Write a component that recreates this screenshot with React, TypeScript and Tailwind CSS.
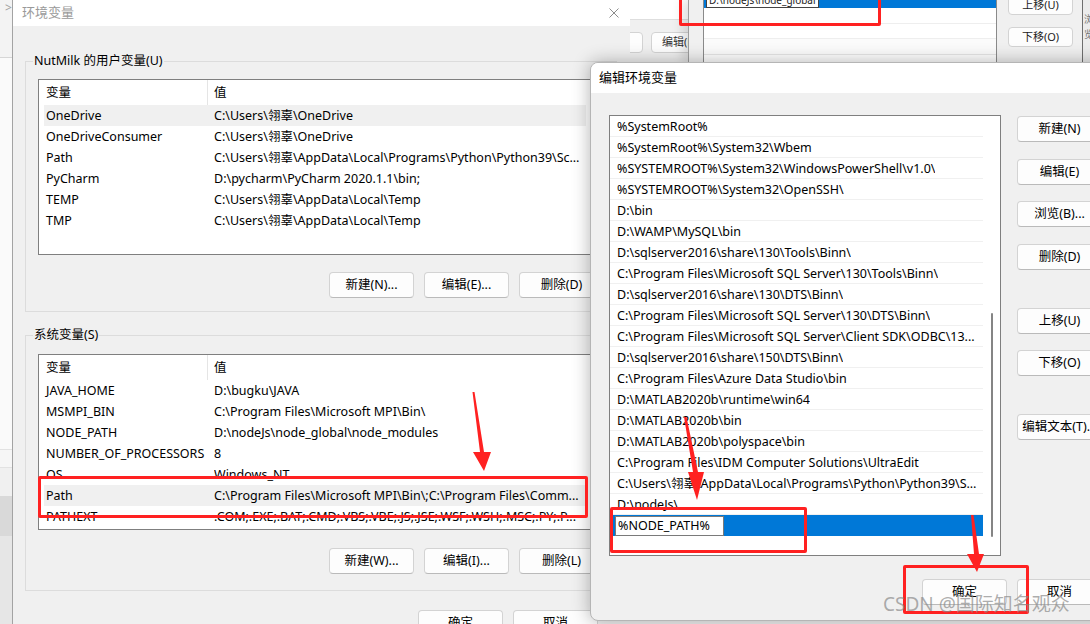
import React from "react";

const userVars: [string, string][] = [
  ["OneDrive", "C:\\Users\\翎辜\\OneDrive"],
  ["OneDriveConsumer", "C:\\Users\\翎辜\\OneDrive"],
  ["Path", "C:\\Users\\翎辜\\AppData\\Local\\Programs\\Python\\Python39\\Scr..."],
  ["PyCharm", "D:\\pycharm\\PyCharm 2020.1.1\\bin;"],
  ["TEMP", "C:\\Users\\翎辜\\AppData\\Local\\Temp"],
  ["TMP", "C:\\Users\\翎辜\\AppData\\Local\\Temp"],
];

const sysVars: [string, string][] = [
  ["JAVA_HOME", "D:\\bugku\\JAVA"],
  ["MSMPI_BIN", "C:\\Program Files\\Microsoft MPI\\Bin\\"],
  ["NODE_PATH", "D:\\nodeJs\\node_global\\node_modules"],
  ["NUMBER_OF_PROCESSORS", "8"],
  ["OS", "Windows_NT"],
  ["Path", "C:\\Program Files\\Microsoft MPI\\Bin\\;C:\\Program Files\\Comm..."],
  ["PATHEXT", ".COM;.EXE;.BAT;.CMD;.VBS;.VBE;.JS;.JSE;.WSF;.WSH;.MSC;.PY;.P..."],
];

const pathItems = [
  "%SystemRoot%",
  "%SystemRoot%\\System32\\Wbem",
  "%SYSTEMROOT%\\System32\\WindowsPowerShell\\v1.0\\",
  "%SYSTEMROOT%\\System32\\OpenSSH\\",
  "D:\\bin",
  "D:\\WAMP\\MySQL\\bin",
  "D:\\sqlserver2016\\share\\130\\Tools\\Binn\\",
  "C:\\Program Files\\Microsoft SQL Server\\130\\Tools\\Binn\\",
  "D:\\sqlserver2016\\share\\130\\DTS\\Binn\\",
  "C:\\Program Files\\Microsoft SQL Server\\130\\DTS\\Binn\\",
  "C:\\Program Files\\Microsoft SQL Server\\Client SDK\\ODBC\\13...",
  "D:\\sqlserver2016\\share\\150\\DTS\\Binn\\",
  "C:\\Program Files\\Azure Data Studio\\bin",
  "D:\\MATLAB2020b\\runtime\\win64",
  "D:\\MATLAB2020b\\bin",
  "D:\\MATLAB2020b\\polyspace\\bin",
  "C:\\Program Files\\IDM Computer Solutions\\UltraEdit",
  "C:\\Users\\翎辜\\AppData\\Local\\Programs\\Python\\Python39\\Sc...",
  "D:\\nodeJs\\",
];

function WinButton({ label, className = "" }: { label: string; className?: string }) {
  return (
    <div
      className={`flex h-[26px] w-[85px] shrink-0 items-center justify-center whitespace-nowrap rounded-[4px] border border-[#d3d3d3] border-b-[#bababa] bg-[#fdfdfd] text-[12.5px] text-black ${className}`}
    >
      {label}
    </div>
  );
}

function VarList({ rows, hover }: { rows: [string, string][]; hover: number }) {
  return (
    <div className="h-[176px] w-[566px] overflow-hidden border border-[#7f7f7f] bg-white">
      <div className="flex h-[25px] items-center">
        <div className="flex h-full w-[169px] items-center border-r border-[#e5e5e5] pl-[7px] pt-[2px]">变量</div>
        <div className="pl-[6px] pt-[2px]">值</div>
      </div>
      {rows.map(([k, v], i) => (
        <div
          key={k + i}
          className={`ml-[5px] flex h-[21px] w-[542px] items-center pt-[2px] ${i === hover ? "bg-[#f0f0f0]" : ""}`}
        >
          <div className="w-[170px] shrink-0 truncate pl-[2px]">{k}</div>
          <div className="min-w-0 flex-1 truncate whitespace-nowrap pr-[4px]">{v}</div>
        </div>
      ))}
    </div>
  );
}

function GroupBox({
  label,
  className,
  children,
}: {
  label: string;
  className: string;
  children: React.ReactNode;
}) {
  return (
    <div className={`relative w-[592px] border border-[#dcdcdc] px-[12px] ${className}`}>
      <span className="absolute -top-[9px] left-[7px] bg-[#f0f0f0] px-[1px] leading-[16px]">{label}</span>
      {children}
    </div>
  );
}

export default function App() {
  return (
    <div className="relative h-[624px] w-[1090px] overflow-hidden bg-[#f0f0f0] font-['Noto_Sans','Noto_Sans_CJK_SC',sans-serif] text-[12.5px] text-black">
      {/* desktop window behind, left strip */}
      <div className="absolute left-0 top-0 flex h-[624px] w-[12px] flex-col">
        <div className="h-[58px] border-b border-[#d6d6d6] bg-[#f3f3f3] pl-[5px] text-[12px] leading-[16px] text-[#a0a0a0]">&gt;</div>
        <div className="h-[392px] border-b border-[#e2e2e2] bg-[#fafafa]" />
        <div className="h-[18px] border-b border-[#e2e2e2] bg-[#f6f6f6]" />
        <div className="h-[28px] bg-[#f0f0f0]" />
        <div className="h-[40px] bg-[#d9d9d9]" />
        <div className="flex-1 bg-[#e6e6e6]" />
      </div>

      {/* first edit dialog, behind, top right */}
      <div className="absolute left-[629px] top-0 flex h-[62px] w-[461px] overflow-hidden bg-[#f0f0f0]">
        <div className="flex w-[59px] shrink-0 flex-col overflow-hidden">
          <div className="h-[20px] shrink-0 border-b border-[#dedede] bg-white" />
          <div className="-ml-[29px] mt-[12px] flex gap-[8px]">
            <div className="h-[21px] w-[43px] shrink-0 rounded-[4px] border border-[#d3d3d3] bg-[#fdfdfd]" />
            <div className="flex h-[21px] w-[85px] shrink-0 items-center rounded-[4px] border border-[#d3d3d3] bg-[#fdfdfd] pl-[10px] text-[11px] text-[#333]">
              编辑(E)...
            </div>
          </div>
        </div>
        <div className="flex w-[394px] shrink-0 border-l border-[#9d9d9d] bg-[#f0f0f0] pl-[14px] shadow-[-6px_0_10px_rgba(0,0,0,0.12)]">
          <div className="-mt-[9px] flex h-[90px] w-[294px] shrink-0 flex-col border-x border-[#8a8a8a] bg-white">
            <div className="flex h-[17px] shrink-0 items-center bg-[#0078d7] pl-[2px]">
              <div className="flex h-[17px] w-[113px] items-end overflow-hidden whitespace-nowrap border border-[#444] bg-white pl-[2px] text-[10px] leading-[13px] text-[#222]">
                D:\nodeJs\node_global
              </div>
            </div>
            <div className="h-[16px] shrink-0 border-b border-[#eeeeee]" />
            <div className="h-[15px] shrink-0 border-b border-[#eeeeee]" />
            <div className="h-[16px] shrink-0 border-b border-[#e6e6e6] bg-[#fbfbfb]" />
          </div>
          <div className="ml-[11px] flex w-[65px] shrink-0 flex-col">
            <div className="-mt-[5px] flex h-[20px] items-center justify-center rounded-[4px] border border-[#d3d3d3] bg-[#fdfdfd] text-[11px] text-[#222]">
              上移(U)
            </div>
            <div className="mt-[12px] flex h-[20px] items-center justify-center rounded-[4px] border border-[#d3d3d3] bg-[#fdfdfd] text-[11px] text-[#222]">
              下移(O)
            </div>
          </div>
        </div>
        <div className="flex-1 border-l border-[#6f6f6f] bg-[#ececec] pl-[1px] pt-[12px] text-[10px] text-[#777]">浏览</div>
      </div>

      {/* main window 环境变量 */}
      <div className="absolute left-[12px] top-0 flex h-[624px] w-[618px] flex-col border-l border-[#a3a3a3] bg-[#f0f0f0]">
        <div className="flex h-[26px] shrink-0 items-center justify-between bg-white pl-[9px] pr-[11px]">
          <span className="text-[13px] text-[#9a9a9a]">环境变量</span>
          <svg width="10" height="10" viewBox="0 0 10 10">
            <path d="M0.5 0.5 L9.5 9.5 M9.5 0.5 L0.5 9.5" stroke="#8c8c8c" strokeWidth="1" />
          </svg>
        </div>
        <div className="flex flex-col pl-[12px]">
          <GroupBox label="NutMilk 的用户变量(U)" className="mt-[35px] pb-[13px] pt-[17px]">
            <VarList rows={userVars} hover={0} />
            <div className="mt-[17px] flex justify-end gap-[10px]">
              <WinButton label="新建(N)..." />
              <WinButton label="编辑(E)..." />
              <WinButton label="删除(D)" />
            </div>
          </GroupBox>
          <GroupBox label="系统变量(S)" className="mt-[23px] pb-[16px] pt-[18px]">
            <VarList rows={sysVars} hover={5} />
            <div className="mt-[18px] flex justify-end gap-[10px]">
              <WinButton label="新建(W)..." />
              <WinButton label="编辑(I)..." />
              <WinButton label="删除(L)" />
            </div>
          </GroupBox>
          <div className="mt-[19px] flex justify-end gap-[10px] pr-[32px]">
            <WinButton label="确定" />
            <WinButton label="取消" />
          </div>
        </div>
      </div>

      {/* edit dialog 编辑环境变量 */}
      <div className="absolute left-[590px] top-[62px] flex h-[559px] w-[531px] flex-col overflow-hidden rounded-[8px] border border-[#b5b5b5] bg-[#f0f0f0] shadow-[0_0_18px_rgba(0,0,0,0.3)]">
        <div className="flex h-[30px] shrink-0 items-center bg-white pl-[8px] text-[13px] text-black">编辑环境变量</div>
        <div className="flex flex-col pl-[18px] pr-[18px] pt-[22px]">
          <div className="flex">
            <div className="flex h-[441px] w-[392px] shrink-0 border border-[#7f7f7f] bg-white">
              <div className="w-[373px] shrink-0">
                {pathItems.map((p, i) => (
                  <div key={i} className="flex h-[21px] items-center border-b border-[#f0f0f0] pl-[7px] pr-[5px] pt-[3px]">
                    <span className="truncate whitespace-nowrap">{p}</span>
                  </div>
                ))}
                <div className="flex h-[21px] items-center bg-[#0078d7] pl-[5px]">
                  <div className="flex h-[20px] w-[109px] items-center border border-[#7a7a7a] bg-white pl-[2px] pt-[2px]">
                    %NODE_PATH%
                  </div>
                </div>
              </div>
              <div className="flex w-[17px] justify-center">
                <div className="mt-[197px] h-[224px] w-[2px] rounded-full bg-[#858585]" />
              </div>
            </div>
            <div className="ml-[16px] flex flex-col">
              <WinButton label="新建(N)" className="mt-[1px]" />
              <WinButton label="编辑(E)" className="mt-[17px]" />
              <WinButton label="浏览(B)..." className="mt-[16px]" />
              <WinButton label="删除(D)" className="mt-[17px]" />
              <WinButton label="上移(U)" className="mt-[38px]" />
              <WinButton label="下移(O)" className="mt-[16px]" />
              <WinButton label="编辑文本(T)..." className="mt-[38px]" />
            </div>
          </div>
          <div className="mt-[23px] flex justify-end gap-[10px]">
            <WinButton label="确定" className="border-[#0067c0] border-b-[#0067c0] bg-[#e3eefa]" />
            <WinButton label="取消" />
          </div>
        </div>
      </div>

      {/* red annotations */}
      <div className="absolute left-[679px] top-[-3px] h-[29px] w-[202px] rounded-[2px] border-[3px] border-[#ff2121]" />
      <div className="absolute left-[38px] top-[476px] h-[42px] w-[550px] rounded-[2px] border-[3px] border-[#ff2121]" />
      <div className="absolute left-[610px] top-[507px] h-[46px] w-[197px] rounded-[2px] border-[3px] border-[#ff2121]" />
      <div className="absolute left-[903px] top-[565px] h-[49px] w-[126px] rounded-[2px] border-[3px] border-[#ff2121]" />
      <svg className="pointer-events-none absolute left-0 top-0" width="1090" height="624" viewBox="0 0 1090 624">
        <polygon points="472.5,392 474.5,392 484,452 491,452 484,471 473,452 480,452" fill="#ff2121" />
        <polygon points="684,417 686.5,417 698,472 704,472 697,500 688,472 693,472" fill="#ff2121" />
        <polygon points="971,515 973.5,515 979,554 984,554 977,572 967,554 974,554" fill="#ff2121" />
      </svg>

      {/* watermark */}
      <div className="pointer-events-none absolute left-[883px] top-[592px] whitespace-nowrap text-[19px] leading-[24px] text-[#8a8a8a]/70">
        CSDN @国际知名观众
      </div>
    </div>
  );
}
